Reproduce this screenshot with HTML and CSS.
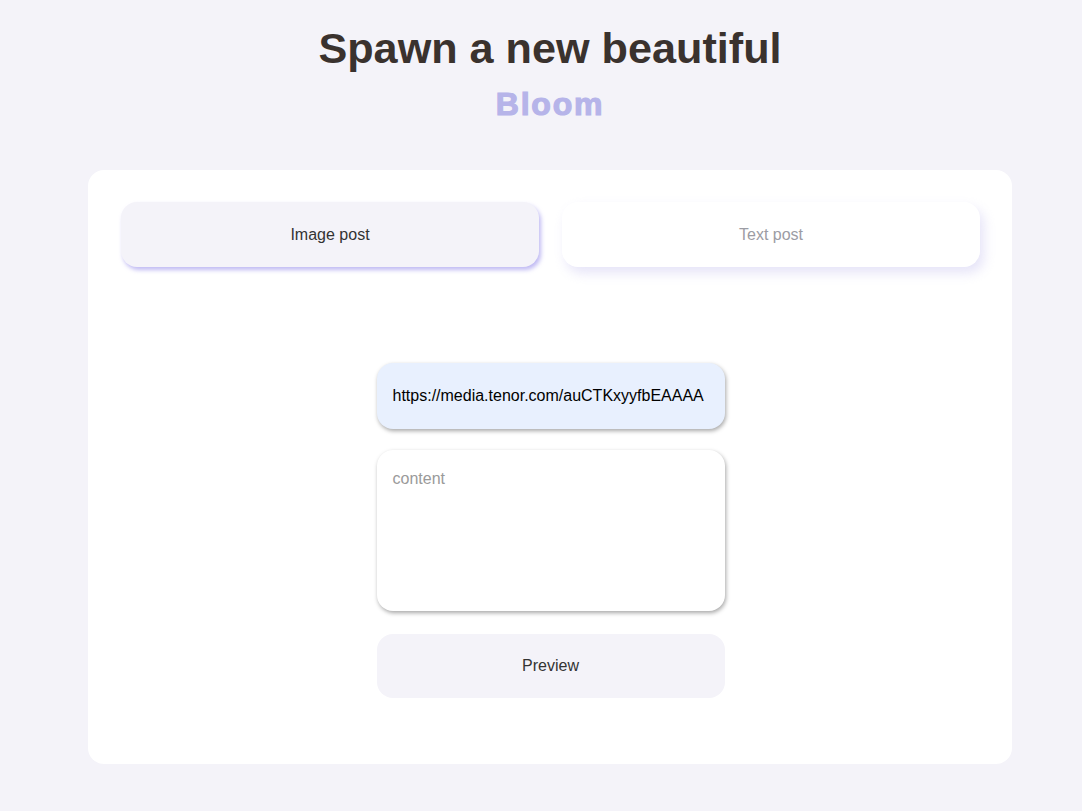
FILE: index.html
```html
<!DOCTYPE html>
<html lang="en">
<head>
<meta charset="utf-8">
<title>Spawn a Bloom</title>
<link rel="stylesheet" href="styles.css">
</head>
<body>
<header class="hero">
  <h1 class="hero-title">Spawn a new beautiful</h1>
  <div class="hero-sub">Bloom</div>
</header>
<main class="card">
  <div class="tabs">
    <button class="tab tab-active">Image post</button>
    <button class="tab tab-idle">Text post</button>
  </div>
  <form class="form">
    <input class="field field-url" type="text" value="https://media.tenor.com/auCTKxyyfbEAAAA">
    <textarea class="field field-content" placeholder="content"></textarea>
    <button class="preview" type="button">Preview</button>
  </form>
</main>
</body>
</html>
```
FILE: styles.css
```css
* { box-sizing: border-box; }
html, body { margin: 0; padding: 0; }
body {
  background: #f4f3f9;
  font-family: "Liberation Sans", Arial, sans-serif;
  color: #333;
  min-height: 811px;
  padding-left: 18px;
}
.hero {
  display: flex;
  flex-direction: column;
  align-items: center;
  padding-top: 22px;
}
.hero-title {
  margin: 0;
  font-size: 43.2px;
  line-height: 52px;
  font-weight: 700;
  color: #3a322e;
}
.hero-sub {
  margin-top: 10px;
  font-size: 32px;
  line-height: 40px;
  font-weight: 700;
  letter-spacing: 1.8px;
  color: #b6b4e9;
  -webkit-text-stroke: 1.2px #b6b4e9;
}
.card {
  width: 924px;
  margin: 46px auto 0;
  background: #fff;
  border-radius: 16px;
  padding: 32px 32px 66px 33px;
}
.tabs {
  display: flex;
  gap: 23px;
}
.tab {
  flex: 1;
  height: 65px;
  border: none;
  border-radius: 16px;
  font-family: inherit;
  font-size: 16px;
}
.tab-active {
  background: #f4f3f9;
  color: #333;
  box-shadow: 2px 3px 4px rgba(150, 140, 235, 0.6);
}
.tab-idle {
  background: #fff;
  color: #9c9ca4;
  box-shadow: 4px 6px 12px rgba(200, 196, 240, 0.45);
}
.form {
  width: 348px;
  margin: 96px auto 0;
  display: flex;
  flex-direction: column;
  gap: 21px;
}
.field {
  width: 100%;
  border: none;
  border-radius: 16px;
  font-family: inherit;
  font-size: 16px;
  padding: 0 16px;
  box-shadow: 1px 2px 4px rgba(0, 0, 0, 0.35);
  outline: none;
}
.field-url {
  height: 66px;
  background: #e8f0fe;
  color: #000;
}
.field-content {
  height: 161px;
  background: #fff;
  padding-top: 20px;
  resize: none;
  display: block;
}
.field-content::placeholder { color: #9a9a9a; }
.preview {
  margin-top: 2px;
  height: 64px;
  border: none;
  border-radius: 16px;
  background: #f4f3f9;
  color: #333;
  font-family: inherit;
  font-size: 16px;
}
```
